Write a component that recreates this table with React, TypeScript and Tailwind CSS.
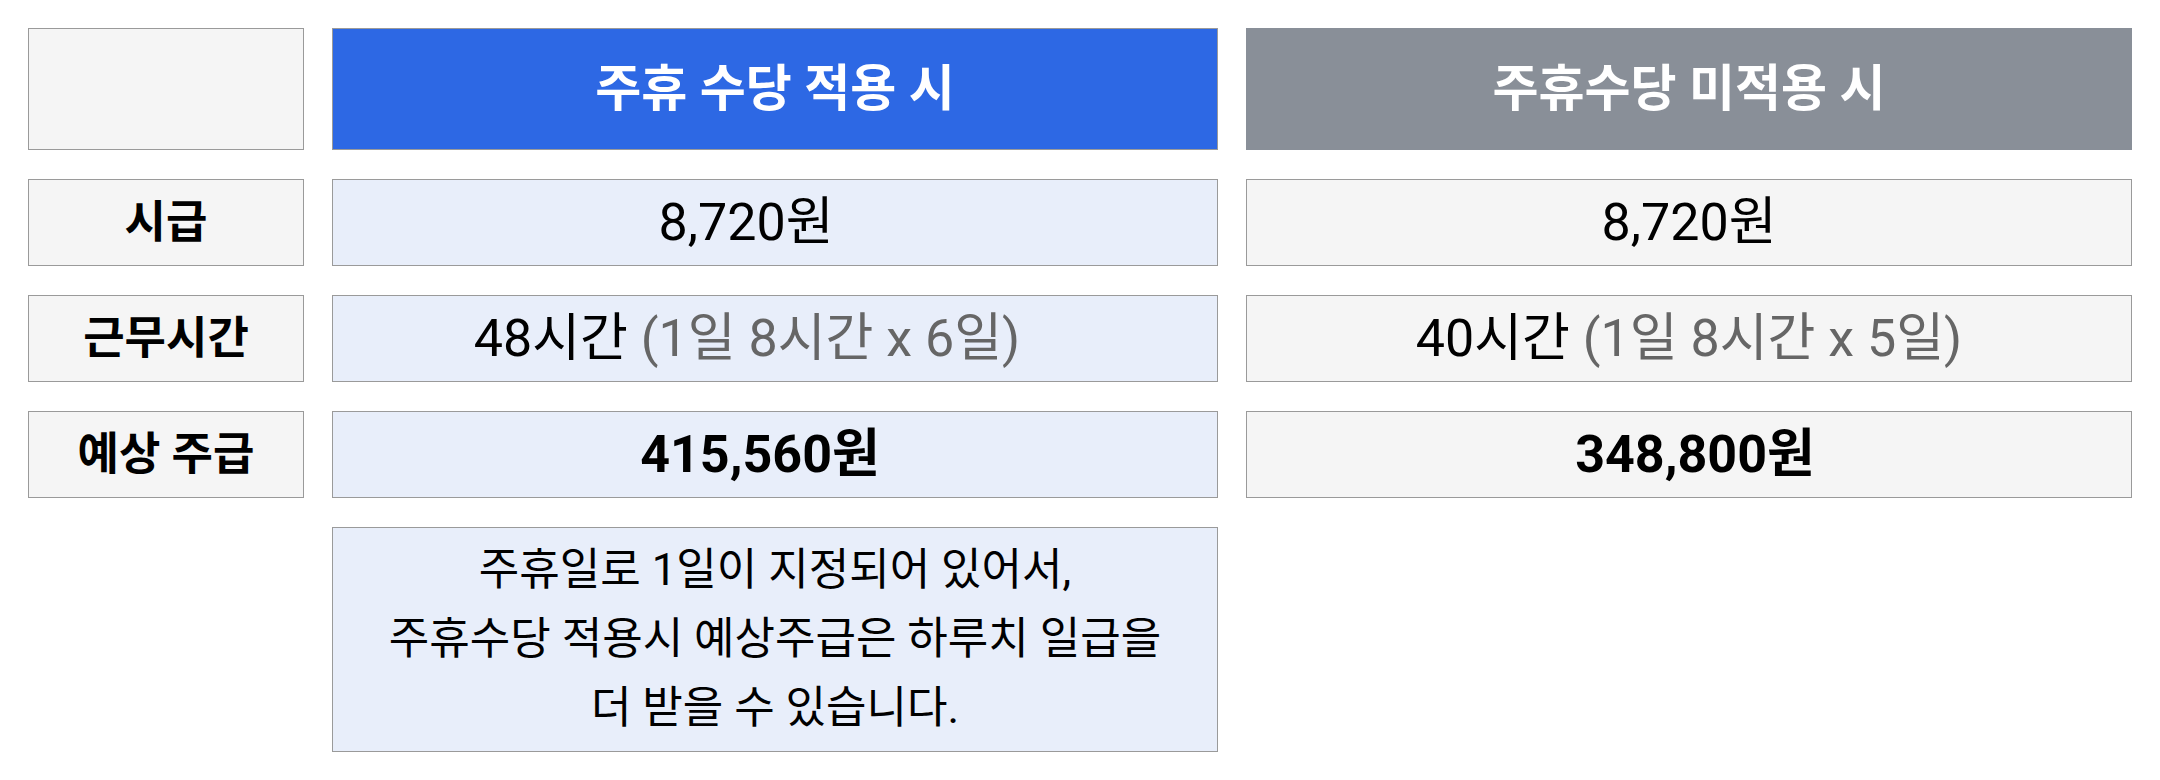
import React from 'react';

const font = { fontFamily: "Roboto, 'Noto Sans CJK KR', sans-serif" };

const Label: React.FC<{ children?: React.ReactNode }> = ({ children }) => (
    <div className="flex items-center justify-center border border-[#9a9a9a] bg-[#f5f5f5] text-[45px] font-bold text-black">
        {children}
    </div>
);

const Cell: React.FC<{ blue?: boolean; bold?: boolean; pad?: string; children?: React.ReactNode }> = ({ blue, bold, pad = '', children }) => (
    <div
        className={[
            'flex items-center justify-center border border-[#9a9a9a] text-[52px] text-black',
            blue ? 'bg-[#e8eefa]' : 'bg-[#f5f5f5]',
            bold ? 'font-bold' : '',
            pad,
        ].join(' ')}
    >
        {children}
    </div>
);

const App: React.FC = () => {
    return (
        <div className="w-[2160px] h-[780px] bg-white pl-[28px] pt-[28px]" style={font}>
            <div className="grid grid-cols-[276px_886px_886px] grid-rows-[122px_87px_87px_87px_225px] gap-x-[28px] gap-y-[29px]">
                {/* 헤더 */}
                <Label />
                <div className="flex items-center justify-center border border-[#9a9a9a] bg-[#2d68e4] text-[50px] font-bold text-white">
                    주휴 수당 적용 시
                </div>
                <div className="flex items-center justify-center bg-[#898f98] text-[50px] font-bold text-white">
                    주휴수당 미적용 시
                </div>

                {/* 시급 */}
                <Label>시급</Label>
                <Cell blue pad="pr-[58px]">8,720원</Cell>
                <Cell>8,720원</Cell>

                {/* 근무시간 */}
                <Label>근무시간</Label>
                <Cell blue pad="pr-[56px]">
                    48시간&nbsp;<span className="text-[#666]">(1일 8시간 x 6일)</span>
                </Cell>
                <Cell>
                    40시간&nbsp;<span className="text-[#666]">(1일 8시간 x 5일)</span>
                </Cell>

                {/* 예상 주급 */}
                <Label>예상 주급</Label>
                <Cell blue bold pad="pr-[30px]">415,560원</Cell>
                <Cell bold pad="pl-[12px]">348,800원</Cell>

                {/* 안내 */}
                <div />
                <div className="flex items-center justify-center border border-[#9a9a9a] bg-[#e8eefa] text-center text-[44px] leading-[69px] text-black">
                    <p>
                        주휴일로 1일이 지정되어 있어서,
                        <br />
                        주휴수당 적용시 예상주급은 하루치 일급을
                        <br />
                        더 받을 수 있습니다.
                    </p>
                </div>
                <div />
            </div>
        </div>
    );
};

export default App;
